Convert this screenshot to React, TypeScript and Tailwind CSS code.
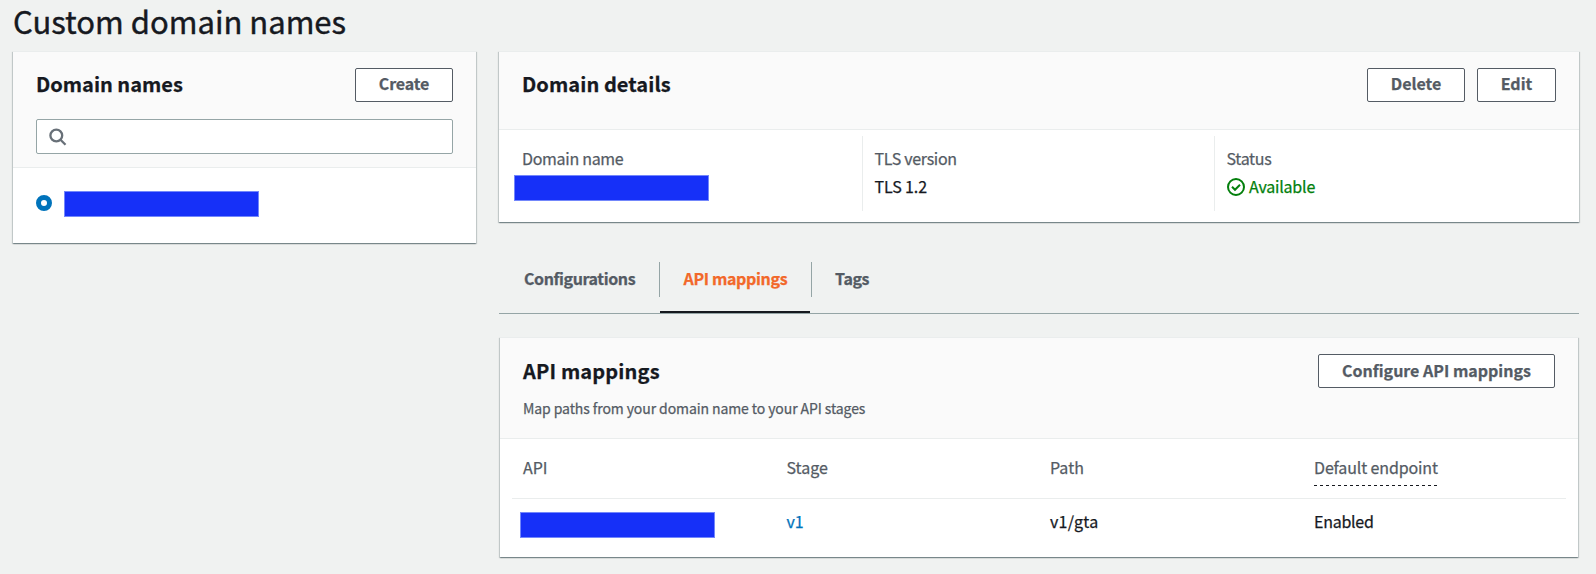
import type { ReactNode } from "react";

const shadow = "shadow-[0_1px_1px_0_rgba(0,28,36,0.3),1px_1px_1px_0_rgba(0,28,36,0.15),-1px_1px_1px_0_rgba(0,28,36,0.15)]";

function Button({ children, className }: { children: ReactNode; className: string }) {
  return (
    <button
      className={`flex h-[34px] items-center justify-center rounded-[2px] border border-[#545b64] bg-white text-base leading-5 font-bold text-[#545b64] ${className}`}
    >
      {children}
    </button>
  );
}

function Redacted() {
  return <div className="h-[26px] w-[195px] border border-[#7387fb] bg-[#1630f8]" />;
}

function Field({ label, children }: { label: string; children: ReactNode }) {
  return (
    <div className="h-[75px] border-l border-[#eaeded] pt-2.5 pl-[11.5px]">
      <div className="h-7 leading-6 text-[#545b64]">{label}</div>
      <div className="leading-6">{children}</div>
    </div>
  );
}

export default function App() {
  return (
    <div className="h-[574px] w-[1596px] bg-[#f0f2f1] pl-[13px] font-['Noto_Sans_CJK_SC','Noto_Sans',sans-serif] text-base text-[#16191f] [-webkit-text-stroke:0.25px]">
      <h1 className="h-[51px] pt-px text-[31px] leading-10 [-webkit-text-stroke:0.4px]">Custom domain names</h1>

      <div className="flex items-start gap-[23px]">
        <section className={`h-[192px] w-[463px] border-t border-[#eaeded] bg-white ${shadow}`}>
          <header className="h-[116px] border-b border-[#eaeded] bg-[#fafafa] pt-4 pr-[23px] pl-[23px]">
            <div className="flex items-start justify-between">
              <h2 className="pt-0.5 text-xl leading-7 font-bold">Domain names</h2>
              <Button className="w-[98px] pb-1 tracking-[-0.15px]">Create</Button>
            </div>
            <div className="mt-[17px] flex h-[35px] items-center rounded-[2px] border border-[#95a5a6] bg-white pl-3">
              <svg className="mt-px size-[18px]" viewBox="0 0 18 18" fill="none" stroke="#687078" strokeWidth="2.3">
                <circle cx="7.3" cy="7.5" r="5.9" />
                <path d="M11.5 11.8l5 5" />
              </svg>
            </div>
          </header>
          <div className="flex items-start gap-3 pt-[23px] pl-[23px]">
            <span className="mt-1 size-4 rounded-full border-5 border-[#0073bb] bg-white" />
            <Redacted />
          </div>
        </section>

        <main className="w-[1080px]">
          <section className={`h-[171px] border-t border-[#eaeded] bg-white ${shadow}`}>
            <header className="flex h-[78px] items-start justify-between border-b border-[#eaeded] bg-[#fafafa] pt-4 pr-[23px] pl-[23px]">
              <h2 className="pt-0.5 text-xl leading-7 font-bold tracking-[0.08px]">Domain details</h2>
              <div className="flex gap-3">
                <Button className="w-[98px] pb-1">Delete</Button>
                <Button className="w-[79px] pb-1">Edit</Button>
              </div>
            </header>
            <div className="grid grid-cols-[363px_352px_352px] pt-1.5 tracking-[-0.3px]">
              <div className="pt-2.5 pl-[23px]">
                <div className="h-[29px] leading-6 text-[#545b64]">Domain name</div>
                <div className="-ml-2">
                  <Redacted />
                </div>
              </div>
              <Field label="TLS version">
                <span className="tracking-[-0.1px]">TLS 1.2</span>
              </Field>
              <Field label="Status">
                <span className="flex items-center gap-1 tracking-[-0.2px] text-[#037f0c]">
                  <svg className="mt-0.5 ml-[0.5px] size-[18px]" viewBox="0 0 18 18" fill="none" stroke="#037f0c" strokeWidth="2">
                    <circle cx="9" cy="9" r="8" />
                    <path d="M5 8.8l3 3 5-5" />
                  </svg>
                  Available
                </span>
              </Field>
            </div>
          </section>

          <nav className="mt-[22px] h-[70px] border-b border-[#95a5a6] pt-[18px] font-bold tracking-[-0.4px] text-[#545b64]">
            <div className="flex h-[51px]">
              <div className="h-[35px] w-[161px] border-r border-[#95a5a6] pt-1 pl-[25px] leading-6">Configurations</div>
              <div className="h-[51px] w-[150px] border-b-2 border-[#16191f] pt-1 pl-[23.5px] leading-6 tracking-[-0.35px] text-[#f2682a]">API mappings</div>
              <div className="ml-px h-[35px] border-l border-[#95a5a6] pt-1 pl-[23px] leading-6">Tags</div>
            </div>
          </nav>

          <section className={`mx-px mt-[23px] h-[220px] border-t border-[#eaeded] bg-white ${shadow}`}>
            <header className="h-[101px] border-b border-[#eaeded] bg-[#fafafa] pt-4 pr-[23px] pl-[23px]">
              <div className="flex items-start justify-between">
                <h2 className="pt-[3px] text-xl leading-7 font-bold tracking-[0.15px]">API mappings</h2>
                <Button className="w-[237px] pb-0.5">Configure API mappings</Button>
              </div>
              <p className="mt-2.5 text-sm leading-5 tracking-[-0.09px] text-[#545b64]">
                Map paths from your domain name to your API stages
              </p>
            </header>
            <div className="mx-3">
              <div className="grid h-[60px] grid-cols-[263.5px_263.5px_264px_1fr] items-start border-b border-[#eaeded] pt-4 pl-[11px] leading-6 text-[#545b64]">
                <div>API</div>
                <div>Stage</div>
                <div>Path</div>
                <div className="tracking-[-0.13px] whitespace-nowrap">
                  Default endpoint
                  <svg className="mt-[6px] block h-px w-[124px]" viewBox="0 0 124 1">
                    <path d="M0 .5h124" stroke="#16191f" strokeDasharray="3 3" />
                  </svg>
                </div>
              </div>
              <div className="grid grid-cols-[263.5px_263.5px_264px_1fr] pt-2.5 pl-[11px] leading-6">
                <div className="-ml-[3px] pt-[3px]">
                  <Redacted />
                </div>
                <div className="text-[#0073bb]">v1</div>
                <div className="tracking-[0.25px]">v1/gta</div>
                <div className="tracking-[-0.25px]">Enabled</div>
              </div>
            </div>
          </section>
        </main>
      </div>
    </div>
  );
}
